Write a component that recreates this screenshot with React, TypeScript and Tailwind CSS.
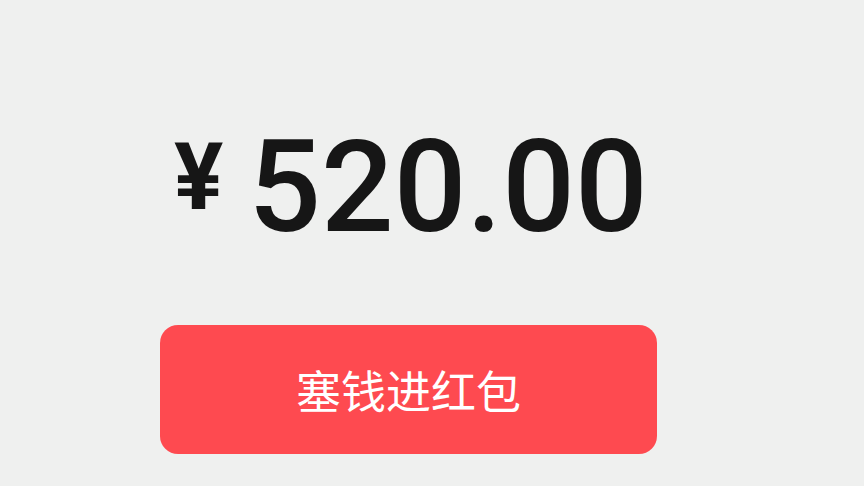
export default function App() {
  return (
    <div className="w-[864px] h-[486px] overflow-hidden bg-[#eff0ef] flex flex-col pl-[160px]">
      <div className="flex items-start mt-[123px] pl-[14px] text-[#161616]" style={{ fontFamily: 'Roboto, "Liberation Sans", sans-serif' }}>
        <span className="text-[92px] font-bold leading-none mt-[9px]">¥</span>
        <span className="text-[128px] font-medium leading-none ml-[25px]">520.00</span>
      </div>
      <button
        className="mt-[74px] w-[497px] h-[129px] rounded-[18px] bg-[#fe4a50] text-white text-[45px] flex items-center justify-center"
        style={{ fontFamily: '"Noto Sans CJK SC", "Noto Sans", sans-serif' }}
      >
        塞钱进红包
      </button>
    </div>
  );
}
